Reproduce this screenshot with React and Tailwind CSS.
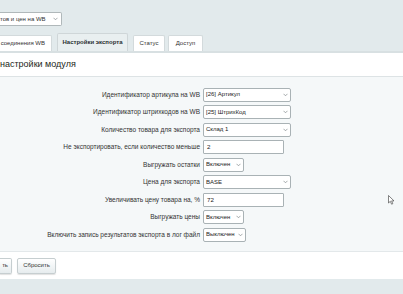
import React from 'react';

const rows = [
  { label: 'Идентификатор артикула на WB', type: 'select', value: '[26] Артикул', w: 'w-[88px]' },
  { label: 'Идентификатор штрихкодов на WB', type: 'select', value: '[25] ШтрихКод', w: 'w-[88px]' },
  { label: 'Количество товара для экспорта', type: 'select', value: 'Склад 1', w: 'w-[88px]' },
  { label: 'Не экспортировать, если количество меньше', type: 'input', value: '2', w: 'w-[81px]' },
  { label: 'Выгружать остатки', type: 'select', value: 'Включен', w: 'w-[41px]' },
  { label: 'Цена для экспорта', type: 'select', value: 'BASE', w: 'w-[88px]' },
  { label: 'Увеличивать цену товара на, %', type: 'input', value: '72', w: 'w-[81px]' },
  { label: 'Выгружать цены', type: 'select', value: 'Включен', w: 'w-[41px]' },
  { label: 'Включить запись результатов экспорта в лог файл', type: 'select', value: 'Выключен', w: 'w-[43px]' },
];

function Chevron() {
  return (
    <svg width="5" height="4" viewBox="0 0 5 4" className="shrink-0">
      <path d="M0.5 0.8 L2.5 2.8 L4.5 0.8" fill="none" stroke="#80878a" strokeWidth="0.7" />
    </svg>
  );
}

function Field({ row }) {
  if (row.type === 'input') {
    return (
      <div className={`${row.w} h-[14px] bg-white border border-[#a9b2b5] rounded-[1px] flex items-center px-[3px] text-[6.2px] text-[#222]`}>
        {row.value}
      </div>
    );
  }
  return (
    <div className={`${row.w} h-[14px] bg-white border border-[#a9b2b5] rounded-[2px] flex items-center justify-between gap-[1px] pl-[2px] pr-[2px] text-[6px] text-[#222]`}>
      <span className="whitespace-nowrap">{row.value}</span>
      <Chevron />
    </div>
  );
}

export default function App() {
  return (
    <div className="relative w-[403px] h-[294px] overflow-hidden bg-[#e2eaec] text-[6.5px] font-['Liberation_Sans',Arial,sans-serif] text-[#333]">
      {/* top select */}
      <div className="pt-[12px] h-[33px]">
        <div className="w-[62px] h-[14px] bg-white border border-[#b0b8ba] border-l-0 rounded-r-[2px] flex items-center justify-between pr-[3px] text-[6px] text-[#333]">
          <span className="whitespace-nowrap">тов и цен на WB</span>
          <Chevron />
        </div>
      </div>

      {/* tabs */}
      <div className="flex items-end h-[18px] text-[6px]">
        <div className="h-[16px] w-[52px] bg-white border border-[#d3dadc] border-l-0 border-b-0 rounded-tr-[2px] flex items-center justify-end pr-[6px] whitespace-nowrap">
          соединения WB
        </div>
        <div className="ml-[5px] h-[18px] w-[71px] bg-[#e9eff0] border border-[#cfd6d8] border-b-0 rounded-t-[2px] flex items-center justify-center font-bold text-[#2b2f30] whitespace-nowrap">
          Настройки экспорта
        </div>
        <div className="ml-[5px] h-[16px] w-[32px] bg-white border border-[#d3dadc] border-b-0 rounded-t-[2px] flex items-center justify-center whitespace-nowrap">
          Статус
        </div>
        <div className="ml-[3px] h-[16px] w-[35px] bg-white border border-[#d3dadc] border-b-0 rounded-t-[2px] flex items-center justify-center whitespace-nowrap">
          Доступ
        </div>
      </div>

      {/* panel */}
      <div className="border-t-[2px] border-[#d8e0e2] bg-white">
        <div className="h-[24px] flex items-center text-[9px] text-[#1d1f20] border-b border-[#dde3e5]">
          настройки модуля
        </div>
        <div className="bg-[#f5f8f9] pt-[10.5px] pb-[9.5px] flex flex-col gap-[3.5px] border-b border-[#e3e8ea]">
          {rows.map((row) => (
            <div key={row.label} className="flex items-center h-[14px]">
              <div className="w-[203px] shrink-0 text-right pr-[3px] whitespace-nowrap">
                {row.label}
              </div>
              <Field row={row} />
            </div>
          ))}
        </div>
        <div className="h-[27px] flex items-center gap-[5px] text-[6px]">
          <div className="h-[16px] w-[12px] bg-gradient-to-b from-white to-[#e6ecee] border border-[#c6ced0] border-l-0 rounded-r-[2px] shadow-[0_1px_1px_rgba(0,0,0,0.12)] flex items-center justify-end pr-[3px]">
            ть
          </div>
          <div className="h-[16px] w-[39px] bg-gradient-to-b from-white to-[#e6ecee] border border-[#c6ced0] rounded-[2px] shadow-[0_1px_1px_rgba(0,0,0,0.12)] flex items-center justify-center">
            Сбросить
          </div>
        </div>
      </div>

      {/* mouse pointer */}
      <svg className="absolute left-[388px] top-[195px]" width="7" height="10" viewBox="0 0 7 10">
        <path d="M0.5 0.5 L0.5 8 L2.3 6.3 L3.6 9.2 L4.8 8.7 L3.6 5.9 L6 5.9 Z" fill="#fff" stroke="#333" strokeWidth="0.6" />
      </svg>
    </div>
  );
}
